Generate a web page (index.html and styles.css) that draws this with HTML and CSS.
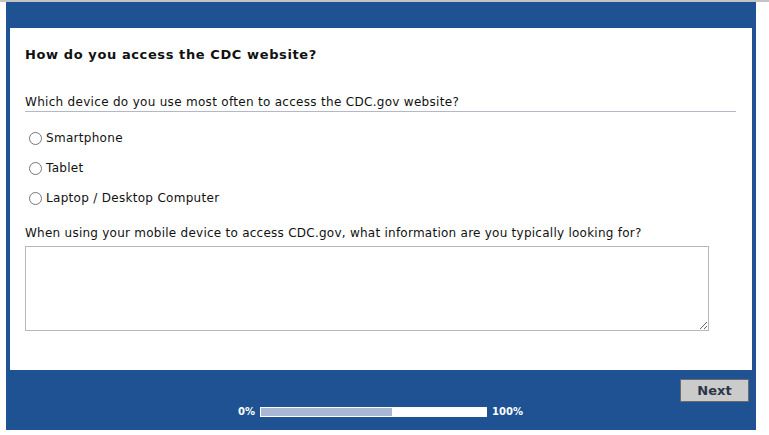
FILE: index.html
```html
<!DOCTYPE html>
<html lang="en">
<head>
    <meta charset="UTF-8">
    <meta name="viewport" content="width=device-width, initial-scale=1.0">
    <title>CDC Survey</title>
    <link rel="stylesheet" href="styles.css">
</head>
<body>
    <div class="frame">
        <div class="panel">
            <h1>How do you access the CDC website?</h1>

            <div class="question">Which device do you use most often to access the CDC.gov website?</div>
            <div class="options">
                <label class="option"><input type="radio" name="device"> Smartphone</label>
                <label class="option"><input type="radio" name="device"> Tablet</label>
                <label class="option"><input type="radio" name="device"> Laptop / Desktop Computer</label>
            </div>

            <label class="question2" for="info">When using your mobile device to access CDC.gov, what information are you typically looking for?</label>
            <textarea id="info"></textarea>
        </div>
        <div class="footer">
            <div class="actions">
                <button type="button" class="next">Next</button>
            </div>
            <div class="progress">
                <span class="pct">0%</span>
                <div class="bar"><div class="fill" style="width: 58%"></div></div>
                <span class="pct">100%</span>
            </div>
        </div>
    </div>
</body>
</html>
```

FILE: styles.css
```css
body {
    margin: 0;
    padding: 0;
    background-color: white;
    border-top: 2px solid #c4c4c4;
    font-family: "DejaVu Sans", Verdana, sans-serif;
    color: #111;
}

.frame {
    width: 742px;
    margin-left: 6px;
    background-color: #1e5293;
    padding: 26px 4px 0 4px;
}

.panel {
    background-color: white;
    height: 342px;
    box-sizing: border-box;
    padding: 19px 16px 0 15px;
}

h1 {
    font-size: 13px;
    line-height: 16px;
    letter-spacing: 0.6px;
    margin: 0 0 32px 0;
}

.question {
    font-size: 12px;
    line-height: 15px;
    letter-spacing: 0.3px;
    padding-bottom: 1px;
    border-bottom: 1px solid #b3b7c9;
}

.options {
    display: flex;
    flex-direction: column;
    gap: 14px;
    padding: 18px 0 0 4px;
}

.option {
    display: flex;
    align-items: center;
    font-size: 12px;
    line-height: 16px;
    letter-spacing: 0.3px;
}

.option input {
    width: 13px;
    height: 13px;
    margin: 0 4px 0 0;
}

.question2 {
    display: block;
    font-size: 12px;
    line-height: 15px;
    letter-spacing: 0.25px;
    margin-top: 20px;
}

textarea {
    display: block;
    width: 684px;
    height: 85px;
    box-sizing: border-box;
    margin-top: 5px;
    border: 1px solid #b8b8b8;
    resize: both;
}

.footer {
    height: 60px;
    box-sizing: border-box;
    padding: 9px 3px 0 0;
}

.actions {
    display: flex;
    justify-content: flex-end;
}

.next {
    width: 69px;
    height: 23px;
    background-color: #cbcbcb;
    border: 1px solid #6a6a6a;
    color: #2b3548;
    font-family: "DejaVu Sans", Verdana, sans-serif;
    font-size: 13px;
    font-weight: bold;
    padding: 0;
}

.progress {
    display: flex;
    align-items: center;
    justify-content: center;
    gap: 5px;
    margin-top: 4px;
    padding-left: 2px;
    color: white;
    font-size: 10px;
    font-weight: bold;
}

.bar {
    width: 227px;
    height: 10px;
    background-color: white;
    box-sizing: border-box;
    padding: 1px;
}

.fill {
    height: 100%;
    background-color: #a9b8d2;
}
```
